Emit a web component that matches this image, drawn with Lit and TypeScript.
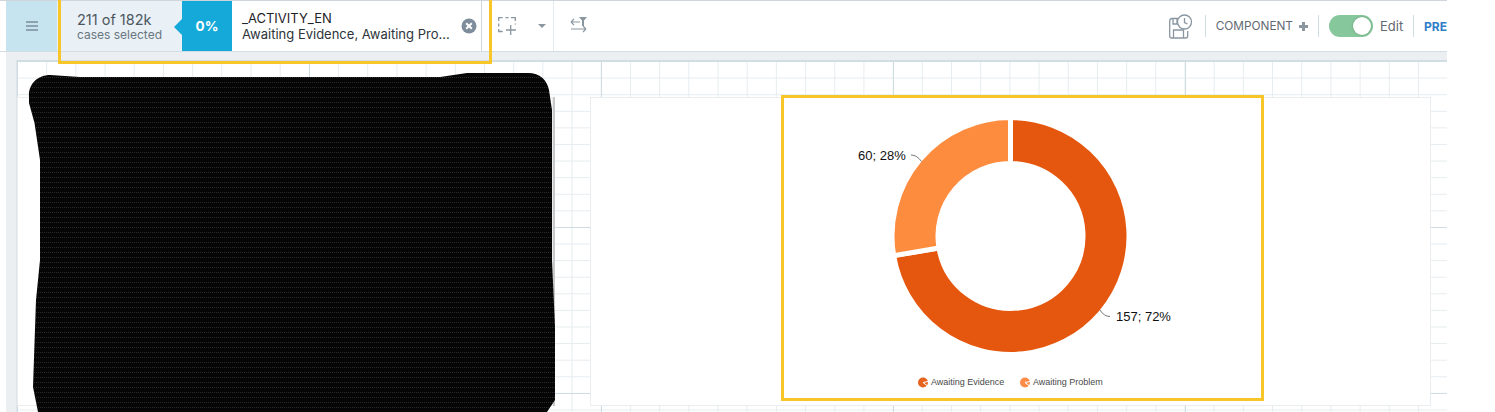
import { LitElement, html, css, svg } from "lit";
import { customElement } from "lit/decorators.js";

const CX = 1010.5, CY = 236, RO = 118.5, RI = 72.5;
const slices = [
  { value: 157, color: "#e5570f" },
  { value: 60, color: "#fd8c3f" },
];
const pt = (r: number, a: number) => `${(CX + r * Math.sin(a)).toFixed(2)} ${(CY - r * Math.cos(a)).toFixed(2)}`;
function arcs() {
  const total = slices.reduce((s, x) => s + x.value, 0);
  let a = 0;
  return slices.map((s) => {
    const b = a + (s.value / total) * Math.PI * 2;
    const large = b - a > Math.PI ? 1 : 0;
    const d = `M${pt(RO, a)} A${RO} ${RO} 0 ${large} 1 ${pt(RO, b)} L${pt(RI, b)} A${RI} ${RI} 0 ${large} 0 ${pt(RI, a)} Z`;
    a = b;
    return svg`<path d=${d} fill=${s.color} stroke="#fff" stroke-width="5"></path>`;
  });
}
const legendIcon = (x: number, c: string) => svg`
  <circle cx=${x} cy="382.5" r="5" fill=${c}></circle>
  <path d="M${x} 382.5 L${x + 5} 381.5 M${x} 382.5 L${x + 4} 385.5" stroke="#fff" stroke-width="1" fill="none"></path>`;

@customElement("app-root")
export class AppRoot extends LitElement {
  static styles = css`
    :host { display: block; width: 1495px; height: 412px; background: #fff; position: relative; overflow: hidden; font-family: Inter, "Liberation Sans", sans-serif; }
    .frame { width: 1447px; height: 412px; overflow: hidden; display: flex; flex-direction: column; }
    .toolbar { flex: none; height: 50px; box-sizing: content-box; border-top: 1px solid #cfd5da; border-bottom: 1px solid #d3dee4; display: flex; align-items: stretch; padding-left: 6px; background: #fff; }
    .menu { width: 51px; box-sizing: border-box; padding-left: 1px; background: #c6e4ef; display: flex; align-items: center; justify-content: center; }
    .cases { width: 125px; box-sizing: border-box; padding-left: 20px; background: #e9f0f6; display: flex; flex-direction: column; justify-content: center; }
    .cases b { font-weight: 400; font-size: 14.5px; line-height: 17px; color: #4c575f; }
    .cases span { font-size: 12px; line-height: 14px; color: #6a7780; }
    .pct { width: 50px; background: #14a9d8; color: #fff; font-weight: 700; font-size: 13.5px; display: flex; align-items: center; justify-content: center; position: relative; }
    .pct::before { content: ""; position: absolute; left: -8px; top: 18px; border-right: 8px solid #14a9d8; border-top: 8px solid transparent; border-bottom: 8px solid transparent; }
    .filter { width: 250px; box-sizing: border-box; padding-left: 10px; border-right: 1px solid #cfd8dd; display: flex; align-items: center; gap: 11px; }
    .filter .txt { width: 208px; color: #2d3439; font-size: 13px; line-height: 16px; white-space: nowrap; }
    .filter .txt div:first-child { color: #1f2428; }
    .tools { width: 55px; display: flex; align-items: center; padding-left: 16px; gap: 20px; border-right: 1px solid #e3ebef; box-sizing: content-box; }
    .tools2 { padding-left: 16px; display: flex; align-items: center; }
    .spacer { flex: 1; }
    .right { display: flex; align-items: center; color: #5f6a72; font-size: 12px; white-space: nowrap; }
    .sep { width: 1px; height: 22px; background: #cfdde4; }
    .hist { margin-right: 11px; display: block; }
    .comp { margin: 0 6px 0 10px; font-size: 11.8px; }
    .plus { margin-right: 10px; display: block; }
    .toggle { width: 44px; height: 22px; border-radius: 11px; background: #86c79b; margin-left: 10px; display: flex; justify-content: flex-end; align-items: center; padding-right: 2px; box-sizing: border-box; }
    .knob { width: 18px; height: 18px; border-radius: 50%; background: #fff; box-shadow: 0 0 2px rgba(0,0,0,.3); }
    .edit { margin: 0 11px 0 7px; width: 22px; font-size: 13px; }
    .pre { margin-left: 10px; width: 23px; color: #2f80c8; font-weight: 700; }
    .main { flex: 1; display: flex; margin-left: 6px; padding: 8px 0 0 10px; background: #eceff1; min-height: 0; }
    .canvas { flex: 1; background-color: #fff; display: flex; gap: 37px; padding: 36px 16px 0 0;
      border-top: 1px solid #d3dee4; border-left: 1px solid #dde5ea;
      background-image:
        linear-gradient(to right, #cfdde3 1px, transparent 1px),
        linear-gradient(to bottom, #cfdde3 1px, transparent 1px),
        linear-gradient(to right, #e6ecef 1px, transparent 1px),
        linear-gradient(to bottom, #e6ecef 1px, transparent 1px);
      background-size: 292px 166px, 292px 166px, 29.2px 16.6px, 29.2px 16.6px; height: 352px; box-sizing: border-box; }
    .card { background: #fff; border: 1px solid #e9edf0; box-sizing: border-box; height: 309px; }
    .left { width: 536px; flex: none; box-shadow: 2px 0 0 #c9c9c9; }
    .chart { width: 841px; flex: none; }
    .chart svg { display: block; margin: -1px; }
    .chart text { font-family: "Liberation Sans", Arial, sans-serif; }
    .lbl { font-size: 13px; fill: #111; }
    .leg { font-size: 9px; fill: #4a4a4a; }
    .scribble { position: absolute; left: 0; top: 0; display: block; }
    .mark { position: absolute; border: 3px solid #f9c62a; box-sizing: border-box; pointer-events: none; }
    .m1 { left: 58px; top: -3px; width: 434px; height: 67px; }
    .m2 { left: 781px; top: 95px; width: 483px; height: 306px; }
  `;

  render() {
    return html`
      <div class="frame">
        <div class="toolbar">
          <div class="menu">
            <svg width="12" height="10" viewBox="0 0 12 10"><path d="M0 1h12M0 5h12M0 9h12" stroke="#8fa3ae" stroke-width="2"></path></svg>
          </div>
          <div class="cases"><b>211 of 182k</b><span>cases selected</span></div>
          <div class="pct">0%</div>
          <div class="filter">
            <div class="txt"><div>_ACTIVITY_EN</div><div>Awaiting Evidence, Awaiting Pro...</div></div>
            <svg width="16" height="16" viewBox="0 0 16 16"><circle cx="8" cy="8" r="7.5" fill="#7e8c9b"></circle><path d="M5.2 5.2l5.6 5.6M10.8 5.2l-5.6 5.6" stroke="#fff" stroke-width="2"></path></svg>
          </div>
          <div class="tools">
            <svg width="20" height="20" viewBox="0 0 20 20" fill="none" stroke="#8a97a1" stroke-width="1.300"><path d="M.7 5V1.700h4M7.500 1.700h3M13 1.700h4.300V5M.7 7.500v3M.7 13v2.500h4M17.300 7.500v1"></path><path d="M12.700 9v10M8 14h10"></path></svg>
            <svg width="8" height="4" viewBox="0 0 8 4"><path d="M0 0h8L4 4z" fill="#8a97a1"></path></svg>
          </div>
          <div class="tools2">
            <svg width="18" height="18" viewBox="0 0 18 18" fill="none" stroke="#8a97a1" stroke-width="1.100"><path d="M1 5h9M1 5l3-3M1 5l3 3M1 12h15M16 12l-3-3M16 12l-3 3"></path><path d="M9 0h8l-3 3.500V9h-2V3.500z" fill="#8a97a1" stroke="none"></path></svg>
          </div>
          <div class="spacer"></div>
          <div class="right">
            <svg class="hist" width="25" height="26" viewBox="0 0 25 26" fill="none" stroke="#8a97a1" stroke-width="1.300"><path d="M9 5.500H3Q.7 5.500.7 8v15q0 2 2 2h14q2 0 2-2v-5"></path><path d="M4 5.500V11h4V6M4.500 25v-8h10v8"></path><circle cx="15.500" cy="9" r="7" fill="#fff"></circle><path d="M15.500 5v4.500l3 1.500"></path></svg>
            <div class="sep"></div>
            <span class="comp">COMPONENT</span>
            <svg class="plus" width="9" height="9" viewBox="0 0 9 9"><path d="M4.500 0v9M0 4.500h9" stroke="#8a97a1" stroke-width="3"></path></svg>
            <div class="sep"></div>
            <div class="toggle"><div class="knob"></div></div>
            <span class="edit">Edit</span>
            <div class="sep"></div>
            <span class="pre">PRE</span>
          </div>
        </div>
        <div class="main">
          <div class="canvas">
            <div class="card left"></div>
            <div class="card chart">
              <svg width="841" height="309" viewBox="590 97 841 309">
                ${arcs()}
                <path d="M911 155q6 0 10.500 6.500M1100 310q4 6.500 10 6.500" stroke="#777" stroke-width="1" fill="none"></path>
                <text class="lbl" x="858" y="160">60; 28%</text>
                <text class="lbl" x="1116" y="321">157; 72%</text>
                ${legendIcon(923, "#e5631f")}
                <text class="leg" x="931" y="385">Awaiting Evidence</text>
                ${legendIcon(1025, "#fd8c4a")}
                <text class="leg" x="1033" y="385">Awaiting Problem</text>
              </svg>
            </div>
          </div>
        </div>
      </div>
      <svg class="scribble" width="560" height="412" viewBox="0 0 560 412">
        <defs>
          <pattern id="st" width="4" height="5" patternUnits="userSpaceOnUse">
            <rect width="4" height="5" fill="#060606"></rect>
            <path d="M0 2.500h4" stroke="#2a2a2a" stroke-width="1" stroke-dasharray="1 1"></path>
          </pattern>
        </defs>
        <path fill="url(#st)" d="M29 97C28 84 38 75 50 75L80 77H440L467 73H528C540 73 547 80 549 90L552 110 552 177V260L555 327V400L547 412H38L33 387 34.500 343 36 300 40 260V160L34.500 123 29 103Z"></path>
      </svg>
      <div class="mark m1"></div>
      <div class="mark m2"></div>
    `;
  }
}
